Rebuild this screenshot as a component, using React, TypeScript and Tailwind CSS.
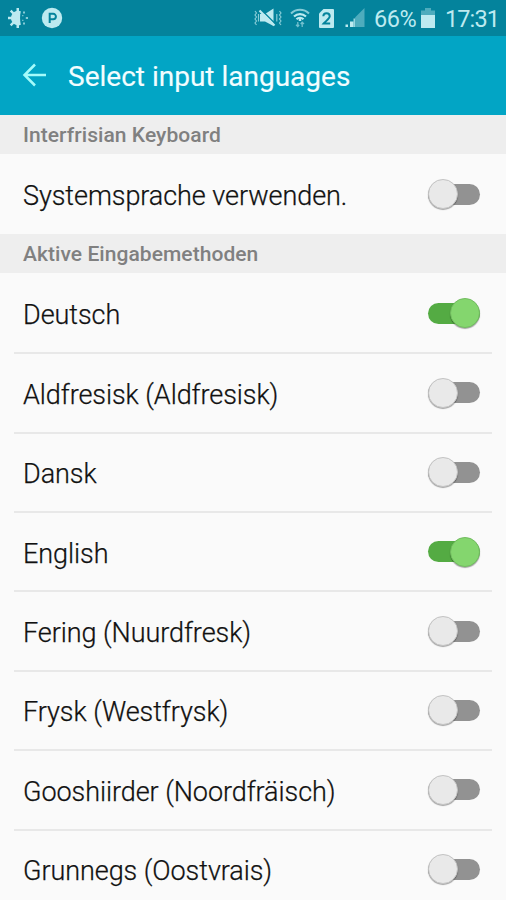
import React, { useState } from "react";
import clsx from "clsx";

interface Language {
    id: string;
    label: string;
    enabled: boolean;
}

const initialLanguages: Language[] = [
    { id: "de", label: "Deutsch", enabled: true },
    { id: "ofs", label: "Aldfresisk (Aldfresisk)", enabled: false },
    { id: "da", label: "Dansk", enabled: false },
    { id: "en", label: "English", enabled: true },
    { id: "frr-fering", label: "Fering (Nuurdfresk)", enabled: false },
    { id: "fy", label: "Frysk (Westfrysk)", enabled: false },
    { id: "frr-goos", label: "Gooshiirder (Noordfräisch)", enabled: false },
    { id: "gos", label: "Grunnegs (Oostvrais)", enabled: false },
];

const BrightnessIcon = () => (
    <svg className="h-[22px] w-[22px]" viewBox="0 0 22 22" fill="currentColor">
        <path d="M13.800 4.300a7.200 7.200 0 1 0 0 13.400c-1-4.300-1-9.100 0-13.400Z" />
        <path d="M9.500 1h2.500v4H9.500zM9.500 17h2.500v4H9.500zM1 9.800h4v2.400H1zM2.800 4.500l1.700-1.700 2.700 2.700-1.700 1.700zM2.800 17.500l1.700 1.700 2.700-2.700-1.700-1.700z" />
        <path d="M16 4.500h2v2h-2zM18.800 10h2.200v2h-2.200zM16 15.500h2v2h-2zM15.200 8h1.200v1.200h-1.200zM15.200 12.800h1.200V14h-1.200z" opacity=".7" />
    </svg>
);

const ParkingIcon = () => (
    <svg className="h-[22px] w-[22px]" viewBox="0 0 22 22">
        <circle cx="11" cy="11" r="10.200" fill="currentColor" />
        <path d="M8.700 16V6.800h3.500a2.700 2.700 0 0 1 0 5.400H8.700" fill="none" stroke="#04839c" strokeWidth="2" />
    </svg>
);

const MuteIcon = () => (
    <svg className="h-[22px] w-[28px]" viewBox="0 0 28 22" fill="none">
        <path d="M6 7h5l8.500-5.500v17.500L11 14.500H6z" fill="currentColor" />
        <path d="m7 2.500 14 14" stroke="#04839c" strokeWidth="1.500" />
        <path d="m5.500 3.500 15 15" stroke="currentColor" strokeWidth="2.200" />
        <path d="m1 4 1.500 2L1 8l1.500 2L1 12l1.500 2L1 16l1.500 2M4.500 7v7.500M25.500 4 27 6l-1.500 2 1.500 2-1.500 2 1.500 2-1.500 2 1.500 2M22.800 7v7.500" stroke="currentColor" strokeWidth="1.200" opacity=".7" />
    </svg>
);

const WifiIcon = () => (
    <svg className="h-[20px] w-[20px]" viewBox="0 0 20 20" fill="none" stroke="currentColor">
        <path d="M1 5.500c5-5 13-5 18 0" strokeWidth="2" opacity=".7" />
        <path d="M4 8.500c3.500-3.300 8.500-3.300 12 0M6.500 11.300c2-2 5-2 7 0" strokeWidth="2.200" />
        <path d="M10 10v3" strokeWidth="2.500" />
        <path d="M7.800 14v4.500M6 16.800l1.800 1.700 1.400-1.700M12.200 19v-4.500M10.700 16l1.500-1.700 1.800 1.700" strokeWidth="1.300" opacity=".6" />
    </svg>
);

const SimIcon = () => (
    <svg className="h-[19px] w-[15px]" viewBox="0 0 15 19">
        <path d="M4.500 0H14a1 1 0 0 1 1 1v17a1 1 0 0 1-1 1H1a1 1 0 0 1-1-1V4.500z" fill="currentColor" />
        <path d="M4.300 7.200c.2-3.900 6.400-3.800 6.400.1 0 2.400-3.600 4.400-6 7.200h6.500" fill="none" stroke="#04839c" strokeWidth="2" />
    </svg>
);

const SignalIcon = () => (
    <svg className="h-[20px] w-[20px]" viewBox="0 0 20 20" fill="currentColor">
        <path d="M10 9.500 19.500 0v19H10z" opacity=".4" />
        <path d="M.5 16.500h2.500V19H.5zM5 13.500h3.500V19H5z" />
        <path d="M8.500 10.500H10V19H8.500z" opacity=".8" />
    </svg>
);

const BatteryIcon = () => (
    <svg className="h-[22px] w-[16px]" viewBox="0 0 16 22" fill="currentColor">
        <path d="M5 1h6v2.500h4V8H1V3.500h4z" opacity=".4" />
        <path d="M1 8h14v13H1z" />
    </svg>
);

const StatusBar = () => (
    <div className="flex h-9 items-center bg-[#04839c] pl-[7px] pr-[6px] text-[#bdeaf0]">
        <BrightnessIcon />
        <div className="ml-[12px]">
            <ParkingIcon />
        </div>
        <div className="ml-auto flex items-center">
            <MuteIcon />
            <div className="ml-[8px]">
                <WifiIcon />
            </div>
            <div className="ml-[9px]">
                <SimIcon />
            </div>
            <div className="ml-[11px]">
                <SignalIcon />
            </div>
            <span className="ml-[9px] w-[43px] whitespace-nowrap pt-[2px] text-[23.500px] leading-[34px] tracking-[-0.500px]">66%</span>
            <div className="ml-[3px]">
                <BatteryIcon />
            </div>
            <span className="ml-[9px] w-[55px] whitespace-nowrap pt-[2px] text-[23.500px] leading-[34px] tracking-[-0.900px]">17:31</span>
        </div>
    </div>
);

const SectionHeader: React.FC<{ title: string }> = ({ title }) => (
    <h2 className="h-[39.200px] bg-[#eeeeee] pl-[23px] text-[21px] font-medium leading-[40px] tracking-[0.060px] text-[#808080]">
        {title}
    </h2>
);

interface ToggleRowProps {
    label: string;
    enabled: boolean;
    divider?: boolean;
    onToggle: () => void;
}

const ToggleRow: React.FC<ToggleRowProps> = ({ label, enabled, divider = false, onToggle }) => (
    <div className="px-[14px]">
        <div
            className={clsx(
                "flex items-center justify-between pl-[9px] pr-[11px]",
                divider ? "h-[79.400px] border-b-2 border-[#e8e8e8]" : "h-[80.500px]"
            )}
        >
            <span
                className={clsx(
                    "whitespace-nowrap text-[27px] font-light leading-8 tracking-[-0.060px] text-[#111111] [-webkit-text-stroke:0.250px_#111111]",
                    divider ? "pt-[4px]" : "pt-[3px]"
                )}
            >
                {label}
            </span>
            <button
                type="button"
                role="switch"
                aria-checked={enabled}
                aria-label={label}
                onClick={onToggle}
                className="flex h-8 w-[54px] items-center"
            >
                <span
                    className={clsx(
                        "mx-px flex h-[21px] w-[52px] items-center rounded-full",
                        enabled ? "justify-end bg-[#54ab43]" : "justify-start bg-[#929292]"
                    )}
                >
                    <span
                        className={clsx(
                            "h-[30px] w-[30px] shrink-0 rounded-full border shadow-[0_1px_1px_rgba(0,0,0,0.35)]",
                            enabled ? "border-[#72bd60] bg-[#84d66e]" : "border-[#c4c4c4] bg-[#e9e9e9]"
                        )}
                    />
                </span>
            </button>
        </div>
    </div>
);

const App: React.FC = () => {
    const [useSystem, setUseSystem] = useState(false);
    const [languages, setLanguages] = useState<Language[]>(initialLanguages);

    const toggleLanguage = (id: string) => {
        setLanguages((prev) => prev.map((l) => (l.id === id ? { ...l, enabled: !l.enabled } : l)));
    };

    return (
        <div className="h-[900px] w-[506px] overflow-hidden bg-[#fafafa] font-[Roboto,sans-serif]">
            <StatusBar />
            <header className="flex h-[78.600px] items-center bg-[#02a5c5] pl-[22px]">
                <button type="button" aria-label="Back" className="text-[#a4fbfb]">
                    <svg className="h-6 w-6" viewBox="0 0 24 24" fill="none" stroke="currentColor" strokeWidth="2.500">
                        <path d="M24 12H3M13 1.500 2.500 12 13 22.500" />
                    </svg>
                </button>
                <h1 className="ml-[22px] whitespace-nowrap pt-[4px] text-[28px] leading-9 text-[#f2fdff] [-webkit-text-stroke:0.150px_#f2fdff]">
                    Select input languages
                </h1>
            </header>

            <SectionHeader title="Interfrisian Keyboard" />
            <ToggleRow
                label="Systemsprache verwenden."
                enabled={useSystem}
                onToggle={() => setUseSystem(!useSystem)}
            />

            <SectionHeader title="Aktive Eingabemethoden" />
            <div className="pt-[1.300px]">
                {languages.map((lang) => (
                    <ToggleRow
                        key={lang.id}
                        label={lang.label}
                        enabled={lang.enabled}
                        divider
                        onToggle={() => toggleLanguage(lang.id)}
                    />
                ))}
            </div>
        </div>
    );
};

export default App;
